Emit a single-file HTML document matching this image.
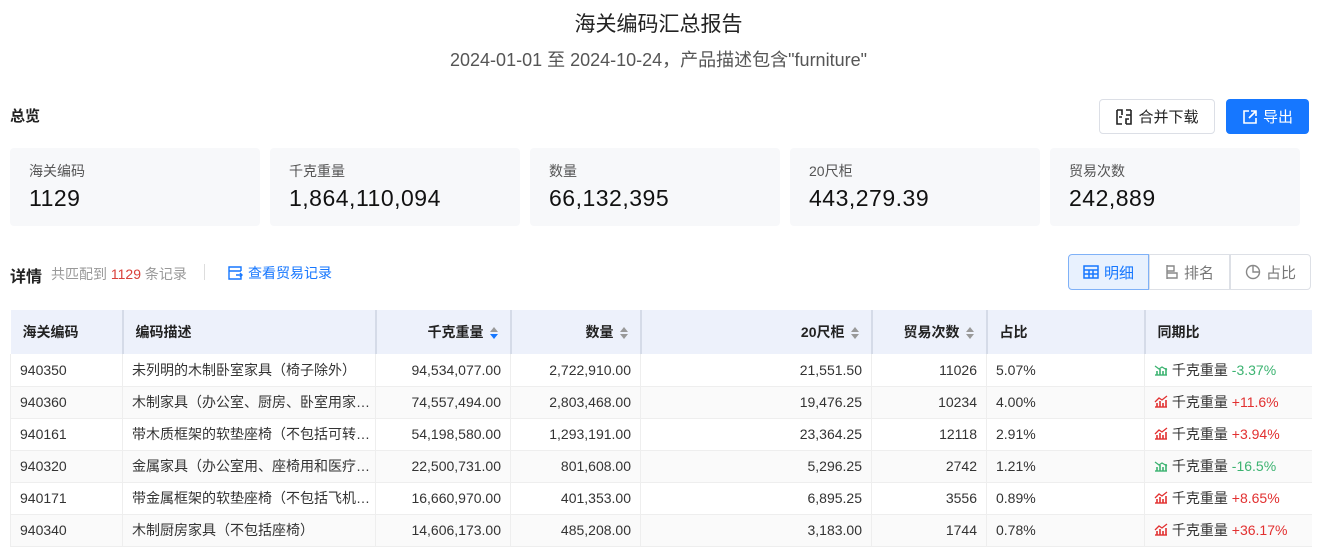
<!DOCTYPE html>
<html><head><meta charset="utf-8"><style>
*{box-sizing:border-box;margin:0;padding:0}
body{width:1317px;height:548px;overflow:hidden;background:#fff;font-family:"Liberation Sans","Noto Sans CJK SC",sans-serif;color:#222;position:relative}
.abs{position:absolute}
.t1{left:0;width:1317px;top:8px;text-align:center;font-size:21px;color:#222}
.t2{left:0;width:1317px;top:46px;text-align:center;font-size:18px;color:#555}
.card{position:absolute;top:148px;width:250px;height:78px;background:#f7f8fa;border-radius:4px}
.card .l{position:absolute;left:19px;top:13px;font-size:14px;color:#555}
.card .v{position:absolute;left:19px;top:37px;font-size:23px;color:#111;letter-spacing:.5px}
.btn{position:absolute;top:99px;height:35px;border-radius:4px;font-size:15px;display:flex;align-items:center;justify-content:center;gap:5px}
table{position:absolute;left:10px;top:310px;width:1301px;border-collapse:collapse;font-size:14px;table-layout:fixed}
th{background:#edf1fb;height:44px;font-weight:bold;font-size:14px;color:#222;border-left:2px solid #d5dbe8;padding:0 12px;text-align:left}
th:first-child{border-left:none}
td{height:32px;padding:0 9px;color:#333;border-left:1px solid #eee;border-bottom:1px solid #eee;white-space:nowrap;overflow:hidden}
tr:nth-child(odd) td{background:#fafafa}
.r{text-align:right}
.s{display:inline-block;vertical-align:middle;margin-left:6px;width:8px;height:12px;position:relative}
.s:before{content:"";position:absolute;top:0;left:0;border:4px solid transparent;border-bottom:5px solid #999;border-top:0}
.s:after{content:"";position:absolute;bottom:0;left:0;border:4px solid transparent;border-top:5px solid #999;border-bottom:0}
.s.b:after{border-top-color:#1677ff}
.g{color:#3cb371}.rd{color:#e23030}
.seg{position:absolute;top:254px;height:36px;display:flex;font-size:15px}
.seg div{width:81px;border:1px solid #dde0e6;display:flex;align-items:center;justify-content:center;gap:5px;color:#777}
</style></head><body>
<div class="abs t1">海关编码汇总报告</div>
<div class="abs t2">2024-01-01 至 2024-10-24，产品描述包含"furniture"</div>
<div class="abs" style="left:10px;top:105px;font-size:15px;font-weight:bold">总览</div>
<div class="btn" style="left:1099px;width:116px;border:1px solid #dcdfe6;color:#222">
<svg width="18" height="18" viewBox="0 0 18 18" fill="none" stroke="#222" stroke-width="1.6"><path d="M2 2h5v5M2 2v14h5M16 2h-5M16 2v14h-5M11 16v-5h3M4 9h3M11 7h5"/></svg>合并下载</div>
<div class="btn" style="left:1226px;width:83px;background:#1677ff;color:#fff">
<svg width="16" height="16" viewBox="0 0 16 16" fill="none" stroke="#fff" stroke-width="1.6"><path d="M7 2H2v12h12V9M9 2h5v5M14 2L7 9"/></svg>导出</div>
<div class="card" style="left:10px"><div class="l">海关编码</div><div class="v">1129</div></div>
<div class="card" style="left:270px"><div class="l">千克重量</div><div class="v">1,864,110,094</div></div>
<div class="card" style="left:530px"><div class="l">数量</div><div class="v">66,132,395</div></div>
<div class="card" style="left:790px"><div class="l">20尺柜</div><div class="v">443,279.39</div></div>
<div class="card" style="left:1050px"><div class="l">贸易次数</div><div class="v">242,889</div></div>
<div class="abs" style="left:10px;top:263px;font-size:16px;font-weight:bold">详情</div>
<div class="abs" style="left:51px;top:264px;font-size:14px;color:#999">共匹配到 <span style="color:#d9403a">1129</span> 条记录</div>
<div class="abs" style="left:204px;top:264px;width:1px;height:16px;background:#ddd"></div>
<div class="abs" style="left:228px;top:263px;font-size:14px;color:#1677ff;display:flex;align-items:center;gap:5px"><svg width="15" height="14" viewBox="0 0 15 14" fill="none" stroke="#1677ff" stroke-width="1.4"><path d="M13 5V1H1v12h12V9M1 5h12M8 9h6M12 7l2 2-2 2"/></svg>查看贸易记录</div>
<div class="seg" style="left:1068px">
<div style="background:#e8f1fe;border-color:#7fb1f7;color:#1677ff;border-radius:4px 0 0 4px"><svg width="16" height="14" viewBox="0 0 16 14" fill="none" stroke="#1677ff" stroke-width="1.5"><rect x="1" y="1" width="14" height="12"/><path d="M1 5h14M1 9h14M6 5v8M10 5v8"/></svg>明细</div>
<div><svg width="14" height="16" viewBox="0 0 14 16" fill="none" stroke="#888" stroke-width="1.4"><path d="M2 1v14M2 2h7v5H2M2 9h10v5H2"/></svg>排名</div>
<div style="border-radius:0 4px 4px 0"><svg width="16" height="16" viewBox="0 0 16 16" fill="none" stroke="#888" stroke-width="1.4"><circle cx="8" cy="8" r="6.5"/><path d="M8 1.5V8h6.5"/></svg>占比</div>
</div>
<table>
<colgroup><col style="width:112px"><col style="width:253px"><col style="width:135px"><col style="width:130px"><col style="width:231px"><col style="width:115px"><col style="width:158px"><col style="width:167px"></colgroup>
<tr><th>海关编码</th><th>编码描述</th><th class="r">千克重量<span class="s b"></span></th><th class="r">数量<span class="s"></span></th><th class="r">20尺柜<span class="s"></span></th><th class="r">贸易次数<span class="s"></span></th><th>占比</th><th>同期比</th></tr>
<tr><td>940350</td><td>未列明的木制卧室家具（椅子除外）</td><td class="r">94,534,077.00</td><td class="r">2,722,910.00</td><td class="r">21,551.50</td><td class="r">11026</td><td>5.07%</td><td><span class="g">📉</span> 千克重量 <span class="g">-3.37%</span></td></tr>
<tr><td>940360</td><td>木制家具（办公室、厨房、卧室用家…</td><td class="r">74,557,494.00</td><td class="r">2,803,468.00</td><td class="r">19,476.25</td><td class="r">10234</td><td>4.00%</td><td><span class="rd">📈</span> 千克重量 <span class="rd">+11.6%</span></td></tr>
<tr><td>940161</td><td>带木质框架的软垫座椅（不包括可转…</td><td class="r">54,198,580.00</td><td class="r">1,293,191.00</td><td class="r">23,364.25</td><td class="r">12118</td><td>2.91%</td><td><span class="rd">📈</span> 千克重量 <span class="rd">+3.94%</span></td></tr>
<tr><td>940320</td><td>金属家具（办公室用、座椅用和医疗…</td><td class="r">22,500,731.00</td><td class="r">801,608.00</td><td class="r">5,296.25</td><td class="r">2742</td><td>1.21%</td><td><span class="g">📉</span> 千克重量 <span class="g">-16.5%</span></td></tr>
<tr><td>940171</td><td>带金属框架的软垫座椅（不包括飞机…</td><td class="r">16,660,970.00</td><td class="r">401,353.00</td><td class="r">6,895.25</td><td class="r">3556</td><td>0.89%</td><td><span class="rd">📈</span> 千克重量 <span class="rd">+8.65%</span></td></tr>
<tr><td>940340</td><td>木制厨房家具（不包括座椅）</td><td class="r">14,606,173.00</td><td class="r">485,208.00</td><td class="r">3,183.00</td><td class="r">1744</td><td>0.78%</td><td><span class="rd">📈</span> 千克重量 <span class="rd">+36.17%</span></td></tr>
</table>
<script>
document.querySelectorAll('td span.g:first-child,td span.rd:first-child').forEach(function(s){
var up=s.classList.contains('rd');var c=up?'#e23030':'#3cb371';
s.innerHTML='<svg width="14" height="13" viewBox="0 0 14 13" style="vertical-align:-1px"><path d="M1 12h12" stroke="'+c+'" stroke-width="1.4"/><path d="M3 12V8M6 12V6M9 12V8M12 12V5" stroke="'+c+'" stroke-width="1.6"/><path d="'+(up?'M1 7l4-4 3 2 5-4':'M1 3l4 3 3-2 5 3')+'" fill="none" stroke="'+c+'" stroke-width="1.3"/></svg>';});
</script>
</body></html>
